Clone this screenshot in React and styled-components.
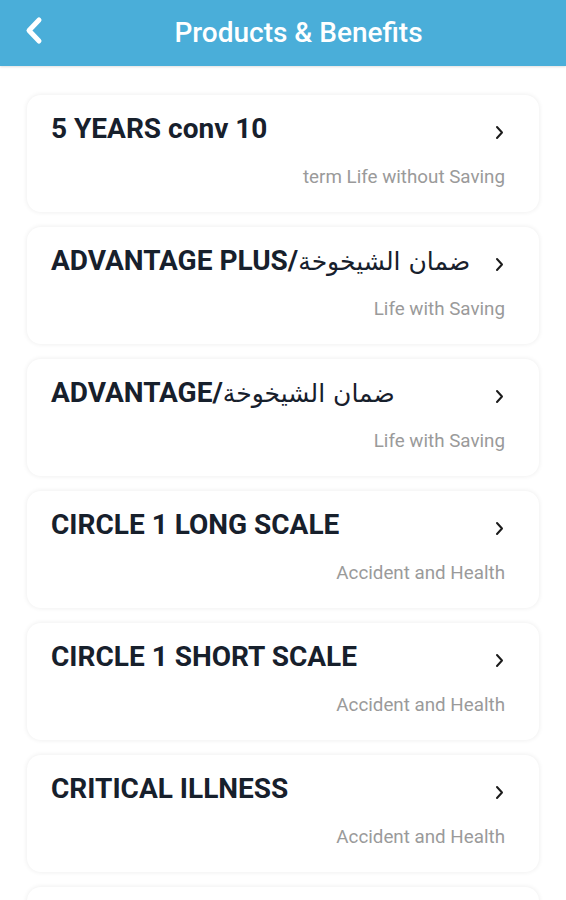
import React from "react";
import styled, { createGlobalStyle } from "styled-components";

const GlobalStyle = createGlobalStyle`
  html, body {
    margin: 0;
    padding: 0;
    background: #ffffff;
    font-family: Roboto, "DejaVu Sans", sans-serif;
  }
`;

const Page = styled.div`
  width: 566px;
  height: 900px;
  overflow: hidden;
  background: #ffffff;
`;

const Header = styled.header`
  height: 66px;
  background: #4aaed9;
  display: flex;
  align-items: center;
  box-shadow: 0 1px 2px rgba(0, 0, 0, 0.12);
`;

const BackButton = styled.button`
  border: 0;
  background: none;
  padding: 0;
  margin-left: 21px;
  width: 26px;
  height: 34px;
  display: flex;
  align-items: center;
  justify-content: center;
  margin-top: -5px;
`;

const Title = styled.h1`
  flex: 1;
  margin: -1px 0 0 0;
  padding-right: 16px;
  text-align: center;
  color: #ffffff;
  font-size: 28px;
  font-weight: 500;
`;

const List = styled.div`
  display: flex;
  flex-direction: column;
  gap: 15px;
  padding: 29px 27px 0 27px;
`;

const Card = styled.div`
  flex: none;
  height: 117px;
  box-sizing: border-box;
  background: #ffffff;
  border-radius: 14px;
  box-shadow: 0 0 4px 1px rgba(0, 0, 0, 0.06);
  padding: 16px 34px 0 24px;
  display: flex;
  flex-direction: column;
`;

const TitleRow = styled.div`
  display: flex;
  align-items: center;
  justify-content: space-between;
  height: 34px;
`;

const Name = styled.div`
  font-family: Roboto, "DejaVu Sans", sans-serif;
  font-size: 28px;
  font-weight: 700;
  color: #17202c;
  white-space: nowrap;
`;

const Arabic = styled.span`
  font-family: "DejaVu Sans", sans-serif;
  font-size: 25px;
  font-weight: 400;
`;

const Chevron = styled.svg`
  flex: none;
  margin-right: 1px;
  margin-top: 8px;
`;

const Category = styled.div`
  margin-top: 21px;
  text-align: right;
  font-size: 18.8px;
  color: #9a9a9a;
`;

const products = [
  { name: "5 YEARS conv 10", category: "term Life without Saving" },
  { name: "ADVANTAGE PLUS/", arabic: "ضمان الشيخوخة", category: "Life with Saving" },
  { name: "ADVANTAGE/", arabic: "ضمان الشيخوخة", category: "Life with Saving" },
  { name: "CIRCLE 1 LONG SCALE", category: "Accident and Health" },
  { name: "CIRCLE 1 SHORT SCALE", category: "Accident and Health" },
  { name: "CRITICAL ILLNESS", category: "Accident and Health" },
];

const ProductCard = ({ name, arabic, category }) => (
  <Card>
    <TitleRow>
      <Name>
        {name}
        {arabic && <Arabic>{arabic}</Arabic>}
      </Name>
      <Chevron width="9" height="15" viewBox="0 0 9 15">
        <path
          d="M2 2 L7 7.5 L2 13"
          fill="none"
          stroke="#1b1b1b"
          strokeWidth="2"
          strokeLinecap="round"
          strokeLinejoin="round"
        />
      </Chevron>
    </TitleRow>
    <Category>{category}</Category>
  </Card>
);

const App = () => (
  <Page>
    <GlobalStyle />
    <Header>
      <BackButton aria-label="back">
        <svg width="22" height="32" viewBox="0 0 22 32">
          <path
            d="M16 5 L6 15.5 L16 26"
            fill="none"
            stroke="#ffffff"
            strokeWidth="5"
            strokeLinecap="round"
            strokeLinejoin="round"
          />
        </svg>
      </BackButton>
      <Title>Products &amp; Benefits</Title>
    </Header>
    <List>
      {products.map((p) => (
        <ProductCard key={p.name} {...p} />
      ))}
      {/* next card, scrolled below the fold */}
      <Card />
    </List>
  </Page>
);

export default App;
